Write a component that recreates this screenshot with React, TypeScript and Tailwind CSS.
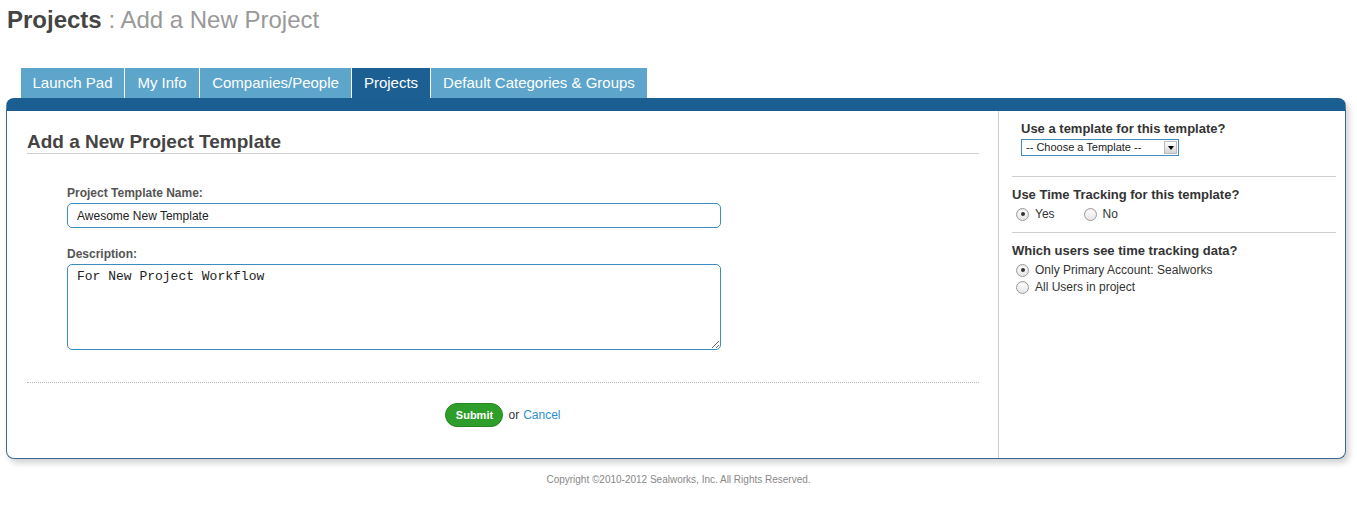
import { useState } from "react";

const tabs = ["Launch Pad", "My Info", "Companies/People", "Projects", "Default Categories & Groups"];
const tabWidths: Record<string, string> = {
  "Launch Pad": "w-[103px]",
  "My Info": "w-[74px]",
  "Companies/People": "w-[151px]",
  Projects: "w-[78px]",
  "Default Categories & Groups": "w-[216px]",
};

function Radio({ checked, label, onClick }: { checked: boolean; label: string; onClick: () => void }) {
  return (
    <button type="button" onClick={onClick} className="flex items-center gap-[6px] h-[16px] text-[12px] text-[#333]">
      <span className="w-[13px] h-[13px] rounded-full border border-[#9a9a9a] bg-gradient-to-b from-white to-[#e6e6e6] flex items-center justify-center shadow-[inset_0_1px_1px_rgba(0,0,0,0.08)]">
        {checked && <span className="w-[4px] h-[4px] rounded-full bg-[#333]" />}
      </span>
      <span>{label}</span>
    </button>
  );
}

export default function App() {
  const [name, setName] = useState("Awesome New Template");
  const [description, setDescription] = useState("For New Project Workflow");
  const [tracking, setTracking] = useState(true);
  const [users, setUsers] = useState("primary");

  return (
    <div className="w-full h-[531px] bg-white font-['Liberation_Sans',Arial,sans-serif] overflow-hidden">
      <h1 className="pl-[7px] pt-[6px] text-[24px] leading-[28px]">
        <span className="font-bold text-[#444]">Projects</span>
        <span className="text-[#999]"> : Add a New Project</span>
      </h1>

      <div className="mt-[34px] ml-[21px] flex h-[30px]">
        {tabs.map((t) => (
          <div
            key={t}
            className={`${tabWidths[t]} mr-px flex items-center justify-center text-[15px] text-white ${
              t === "Projects" ? "bg-[#1c5f92]" : "bg-[#5da5cb]"
            }`}
          >
            {t}
          </div>
        ))}
      </div>

      <div className="mx-[6px] w-[1340px] h-[361px] rounded-[8px] border border-[#3c6891] border-t-[13px] border-t-[#1b5e91] bg-white shadow-[3px_4px_6px_rgba(0,0,0,0.18)] flex">
        {/* left column */}
        <div className="w-[992px] border-r border-[#cfcfcf] pl-[20px] pr-[19px] pt-[20px]">
          <h2 className="text-[19px] leading-[22px] font-bold text-[#444] border-b border-[#cfcfcf]">
            Add a New Project Template
          </h2>

          <div className="pl-[40px] mt-[32px]">
            <label className="block text-[12px] leading-[14px] font-bold text-[#555]">Project Template Name:</label>
            <input
              value={name}
              onChange={(e) => setName(e.target.value)}
              className="mt-[3px] block w-[654px] h-[25px] rounded-[5px] border border-[#3b8cbf] px-[9px] text-[12px] text-[#222] outline-none"
            />

            <label className="mt-[19px] block text-[12px] leading-[14px] font-bold text-[#555]">Description:</label>
            <textarea
              value={description}
              onChange={(e) => setDescription(e.target.value)}
              className="mt-[3px] block w-[654px] h-[86px] rounded-[5px] border border-[#3b8cbf] px-[9px] pt-[4px] text-[13px] leading-[16px] font-['Liberation_Mono','Courier_New',monospace] text-[#222] outline-none"
            />
          </div>

          <div className="mt-[32px] border-t border-dotted border-[#bbb]" />

          <div className="mt-[20px] flex items-center justify-center gap-[5px] text-[12px]">
            <button className="h-[24px] w-[58px] rounded-full bg-[#2e9e2a] border border-[#26861f] text-white text-[11px] font-bold">
              Submit
            </button>
            <span className="text-[#333]">or</span>
            <a href="#" className="text-[#2b8fd2] -ml-[1px]">Cancel</a>
          </div>
        </div>

        {/* right column */}
        <div className="flex-1 pl-[13px] pr-[9px] pt-[10px] text-[#333]">
          <div className="pl-[9px]">
            <div className="text-[13px] leading-[16px] font-bold">Use a template for this template?</div>
            <div className="relative mt-[2px] w-[158px] h-[17px]">
              <select className="block appearance-none w-full h-full border border-[#3b8cbf] bg-white pl-[4px] text-[11px] leading-[15px] text-[#222] outline-none">
                <option>-- Choose a Template --</option>
              </select>
              <span className="absolute right-[2px] top-[2px] w-[13px] h-[13px] bg-gradient-to-b from-white to-[#d4d4d4] border border-[#bbb] flex items-center justify-center pointer-events-none">
                <span className="w-0 h-0 border-l-[3px] border-r-[3px] border-t-[4px] border-l-transparent border-r-transparent border-t-black" />
              </span>
            </div>
          </div>

          <div className="mt-[20px] border-t border-[#cfcfcf]" />

          <div className="mt-[10px] text-[13px] leading-[16px] font-bold">Use Time Tracking for this template?</div>
          <div className="mt-[3px] pl-[4px] flex gap-[29px]">
            <Radio checked={tracking} label="Yes" onClick={() => setTracking(true)} />
            <Radio checked={!tracking} label="No" onClick={() => setTracking(false)} />
          </div>

          <div className="mt-[10px] border-t border-[#cfcfcf]" />

          <div className="mt-[10px] text-[13px] leading-[16px] font-bold">Which users see time tracking data?</div>
          <div className="mt-[3px] pl-[4px] flex flex-col gap-[1px]">
            <Radio checked={users === "primary"} label="Only Primary Account: Sealworks" onClick={() => setUsers("primary")} />
            <Radio checked={users === "all"} label="All Users in project" onClick={() => setUsers("all")} />
          </div>
        </div>
      </div>

      <p className="mt-[13px] text-center text-[10px] text-[#888]">
        Copyright ©2010-2012 Sealworks, Inc. All Rights Reserved.
      </p>
    </div>
  );
}
